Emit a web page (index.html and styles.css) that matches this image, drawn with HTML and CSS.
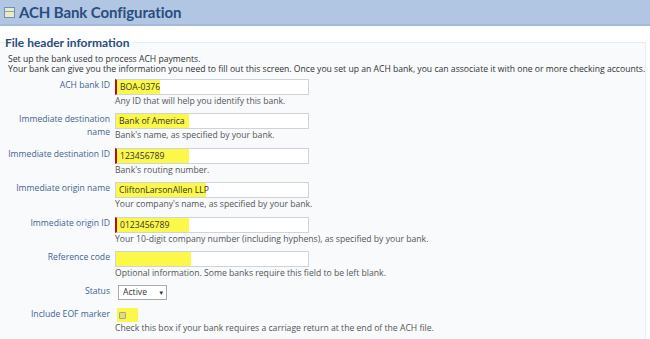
FILE: index.html
```html
<!DOCTYPE html>
<html lang="en">
<head>
  <meta charset="UTF-8">
  <title>ACH Bank Configuration</title>
  <link rel="stylesheet" href="styles.css">
</head>
<body>
  <div class="titlebar">
    <span class="title-icon"></span>
    <h1>ACH Bank Configuration</h1>
  </div>

  <fieldset class="panel">
    <legend>File header information</legend>
    <p class="intro">Set up the bank used to process ACH payments.<br>Your bank can give you the information you need to fill out this screen. Once you set up an ACH bank, you can associate it with one or more checking accounts.</p>

    <div class="row">
      <label>ACH bank ID</label>
      <div class="ctrl">
        <div class="input required"><span class="hl" style="width:43px">BOA-0376</span></div>
        <div class="help">Any ID that will help you identify this bank.</div>
      </div>
    </div>

    <div class="row">
      <label>Immediate destination name</label>
      <div class="ctrl">
        <div class="input"><span class="hl" style="width:73px">Bank of America</span></div>
        <div class="help">Bank's name, as specified by your bank.</div>
      </div>
    </div>

    <div class="row">
      <label>Immediate destination ID</label>
      <div class="ctrl">
        <div class="input required"><span class="hl" style="width:72px">123456789</span></div>
        <div class="help">Bank's routing number.</div>
      </div>
    </div>

    <div class="row">
      <label>Immediate origin name</label>
      <div class="ctrl">
        <div class="input"><span class="hl" style="width:90px">CliftonLarsonAllen LLP</span></div>
        <div class="help">Your company's name, as specified by your bank.</div>
      </div>
    </div>

    <div class="row">
      <label>Immediate origin ID</label>
      <div class="ctrl">
        <div class="input required"><span class="hl" style="width:72px">0123456789</span></div>
        <div class="help">Your 10-digit company number (including hyphens), as specified by your bank.</div>
      </div>
    </div>

    <div class="row">
      <label>Reference code</label>
      <div class="ctrl">
        <div class="input"><span class="hl" style="width:75px"></span></div>
        <div class="help">Optional information. Some banks require this field to be left blank.</div>
      </div>
    </div>

    <div class="row row-status">
      <label>Status</label>
      <div class="ctrl">
        <div class="select">Active <span class="arrow">&#9660;</span></div>
      </div>
    </div>

    <div class="row">
      <label>Include EOF marker</label>
      <div class="ctrl">
        <div class="check-hl"><span class="checkbox"></span></div>
        <div class="help">Check this box if your bank requires a carriage return at the end of the ACH file.</div>
      </div>
    </div>
  </fieldset>
</body>
</html>
```

FILE: styles.css
```css
body {
  margin: 0;
  font-family: 'Open Sans', sans-serif;
  font-size: 8.65px;
  color: #333;
  background: #fff;
}
.titlebar {
  display: flex;
  align-items: center;
  height: 24px;
  padding-left: 4px;
  background-color: #b0c6e2;
  border-bottom: 2px solid #a2b9d9;
}
.title-icon {
  width: 9px;
  height: 9px;
  margin-right: 4px;
  border: 1px solid #6f8fbf;
  background: #e8ecc0;
  box-shadow: inset 0 3px 0 #e8ecc0, inset 0 4px 0 #8aa2c8;
}
h1 {
  margin: 0;
  font-family: 'Lato', sans-serif;
  font-size: 15px;
  font-weight: bold;
  color: #2b4c7e;
  letter-spacing: -0.1px;
}
.panel {
  margin: 9px 4px 0 0;
  padding: 4px 0 4px 8px;
  border: 1px solid #e4eef7;
  border-left: none;
  background-color: #f8fafc;
}
.panel legend {
  padding: 0 4px 0 0;
  margin-left: -3px;
  font-family: 'Lato', sans-serif;
  font-size: 12px;
  font-weight: bold;
  color: #2b4c7e;
}
.intro {
  margin: 0 0 5px 0;
  line-height: 10px;
  white-space: nowrap;
}
.row {
  display: flex;
  margin-bottom: 6.4px;
}
.row-status {
  margin-bottom: 8px;
}
.row label {
  width: 102px;
  margin-right: 5px;
  text-align: right;
  color: #44638f;
  line-height: 13px;
}
.ctrl {
  flex: 1;
}
.input {
  width: 194px;
  height: 16px;
  border: 1px solid #cfd4da;
  background: #fff;
  box-sizing: border-box;
}
.input.required {
  border-left: 2px solid #b3121b;
}
.hl {
  display: block;
  height: 100%;
  padding-left: 3px;
  box-sizing: border-box;
  background: #fbf84a;
  line-height: 14px;
  color: #333;
  white-space: nowrap;
}
.help {
  line-height: 12px;
  color: #555;
}
.select {
  width: 49px;
  height: 15px;
  margin-left: 3px;
  padding-left: 4px;
  box-sizing: border-box;
  border: 1px solid #aaa;
  background: #fff;
  line-height: 13px;
  color: #333;
}
.arrow {
  margin-left: 9px;
  font-size: 6px;
}
.check-hl {
  width: 21px;
  height: 14px;
  margin-left: 2px;
  display: flex;
  align-items: center;
  padding-left: 2px;
  box-sizing: border-box;
  background: #fbf84a;
}
.checkbox {
  width: 7px;
  height: 7px;
  border: 1px solid #a9a77a;
  border-radius: 1px;
  background: #dedb8a;
  box-sizing: border-box;
}
```
